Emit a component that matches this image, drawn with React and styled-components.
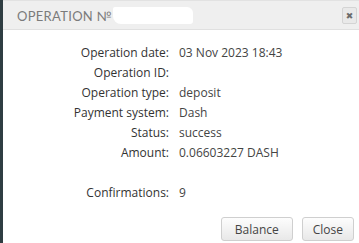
import React from "react"
import styled, { createGlobalStyle } from "styled-components"

const Global = createGlobalStyle`
  html, body {
    margin: 0;
    padding: 0;
    background: #fff;
  }
  body {
    font-family: "Open Sans", "DejaVu Sans", sans-serif;
  }
`

const Page = styled.div`
  display: flex;
  width: 359px;
  height: 243px;
  overflow: hidden;
`

const Strip = styled.div`
  width: 3px;
  flex: none;
  background: #2f3d42;
`

const Dialog = styled.div`
  flex: 1;
  display: flex;
  flex-direction: column;
  background: #fff;
`

const Header = styled.div`
  height: 30px;
  flex: none;
  display: flex;
  align-items: center;
  padding: 0 2px 0 14px;
  background: #efefef;
  border-top: 1px solid #e2e2e2;
  border-bottom: 1px solid #e0e0e0;
  box-sizing: border-box;
`

const Title = styled.div`
  flex: 1;
  display: flex;
  align-items: center;
  font-family: "Lato", "Open Sans", sans-serif;
  font-size: 13px;
  letter-spacing: 0.3px;
  color: #7b7b7b;
  padding-top: 1px;
`

const Redacted = styled.span`
  display: inline-block;
  width: 80px;
  height: 17px;
  margin-left: 1px;
  background: #fff;
  border-radius: 2px 6px 3px 8px;
`

const CloseX = styled.div`
  width: 13px;
  height: 15px;
  display: flex;
  align-items: center;
  justify-content: center;
  border: 1px solid #d4d4d4;
  border-radius: 2px;
  background: #e9e9e9;
  color: #6b6b6b;
  font-size: 9px;
  font-weight: bold;
  margin-top: 1px;
`

const Body = styled.div`
  padding-top: 12px;
`

const Rows = styled.div`
  display: grid;
  grid-template-columns: 166px 1fr;
  column-gap: 10px;
  grid-auto-rows: 20px;
  align-items: center;
  font-size: 12px;
  color: #333;
`

const Label = styled.div`
  text-align: right;
`

const Value = styled.div`
  color: #444;
`

const Spacer = styled.div`
  grid-column: 1 / span 2;
`

const Footer = styled.div`
  display: flex;
  justify-content: flex-end;
  gap: 9px;
  padding: 15px 5px 0 0;
`

const Button = styled.button`
  height: 24px;
  padding: 0 ${(p) => p.$pad || 12}px;
  border: 1px solid #cfcfcf;
  border-radius: 3px;
  background: linear-gradient(#fdfdfd, #e8e8e8);
  font-family: "Open Sans", "DejaVu Sans", sans-serif;
  font-size: 12px;
  color: #444;
  box-sizing: border-box;
`

const rows = [
  ["Operation date:", "03 Nov 2023 18:43"],
  ["Operation ID:", ""],
  ["Operation type:", "deposit"],
  ["Payment system:", "Dash"],
  ["Status:", "success"],
  ["Amount:", "0.06603227 DASH"],
]

export default function App() {
  return (
    <>
      <Global />
      <Page>
        <Strip />
        <Dialog>
          <Header>
            <Title>
              OPERATION №<Redacted />
            </Title>
            <CloseX>✖</CloseX>
          </Header>
          <Body>
            <Rows>
              {rows.map(([l, v]) => (
                <React.Fragment key={l}>
                  <Label>{l}</Label>
                  <Value>{v}</Value>
                </React.Fragment>
              ))}
              <Spacer />
              <Label>Confirmations:</Label>
              <Value>9</Value>
            </Rows>
            <Footer>
              <Button $pad={13}>Balance</Button>
              <Button $pad={10}>Close</Button>
            </Footer>
          </Body>
        </Dialog>
      </Page>
    </>
  )
}
